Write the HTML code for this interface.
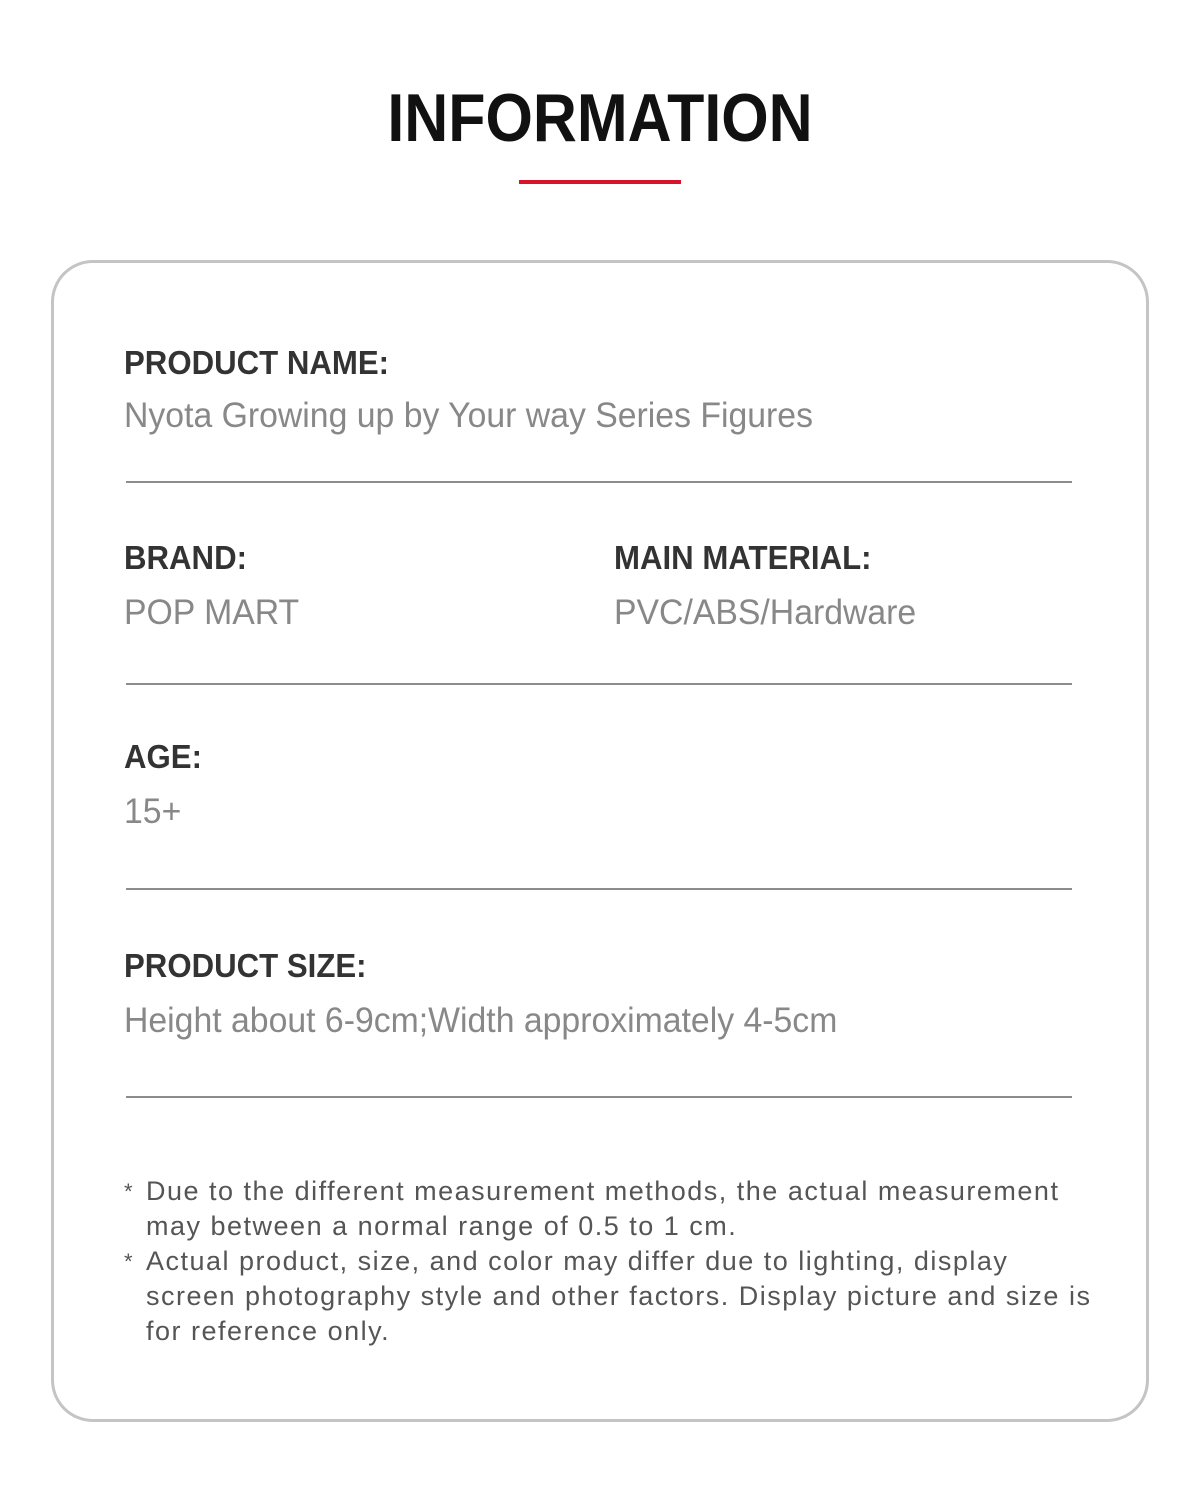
<!DOCTYPE html>
<html><head><meta charset="utf-8"><style>
*{margin:0;padding:0;box-sizing:border-box}
html,body{width:1200px;height:1486px;background:#fff;overflow:hidden}
body{position:relative;font-family:"Liberation Sans",sans-serif}
.a{position:absolute;white-space:nowrap;line-height:1}
.t{left:0;width:1200px;text-align:center;top:84px;font-size:68px;font-weight:bold;color:#111;transform:scaleX(.896);transform-origin:600px 0}
.bar{position:absolute;left:519px;top:180px;width:162px;height:4px;background:#d9142a}
.card{position:absolute;left:51px;top:260px;width:1098px;height:1162px;border:3px solid #c4c4c4;border-radius:42px}
.l{font-size:33px;font-weight:bold;color:#333;transform:scaleX(.945);transform-origin:0 0}
.v{font-size:35px;color:#888;transform:scaleX(.965);transform-origin:0 0}
.hr{position:absolute;left:126px;width:946px;height:2px;background:#8c8c8c}
.n{font-size:27px;color:#555;letter-spacing:1.5px}
</style></head><body>
<div class="a t">INFORMATION</div>
<div class="bar"></div>
<div class="card"></div>

<div class="a l" style="left:124px;top:346px">PRODUCT NAME:</div>
<div class="a v" style="left:124px;top:398px">Nyota Growing up by Your way Series Figures</div>
<div class="hr" style="top:481px"></div>

<div class="a l" style="left:124px;top:541px">BRAND:</div>
<div class="a v" style="left:124px;top:595px">POP MART</div>
<div class="a l" style="left:614px;top:541px">MAIN MATERIAL:</div>
<div class="a v" style="left:614px;top:595px">PVC/ABS/Hardware</div>
<div class="hr" style="top:683px"></div>

<div class="a l" style="left:124px;top:740px">AGE:</div>
<div class="a v" style="left:124px;top:794px">15+</div>
<div class="hr" style="top:888px"></div>

<div class="a l" style="left:124px;top:949px">PRODUCT SIZE:</div>
<div class="a v" style="left:124px;top:1003px">Height about 6-9cm;Width approximately 4-5cm</div>
<div class="hr" style="top:1096px"></div>

<div class="a n" style="left:124px;top:1181px;font-size:22px">*</div>
<div class="a n" style="left:146px;top:1178px">Due to the different measurement methods, the actual measurement</div>
<div class="a n" style="left:146px;top:1213px">may between a normal range of 0.5 to 1 cm.</div>
<div class="a n" style="left:124px;top:1251px;font-size:22px">*</div>
<div class="a n" style="left:146px;top:1248px">Actual product, size, and color may differ due to lighting, display</div>
<div class="a n" style="left:146px;top:1283px">screen photography style and other factors. Display picture and size is</div>
<div class="a n" style="left:146px;top:1318px">for reference only.</div>
</body></html>
